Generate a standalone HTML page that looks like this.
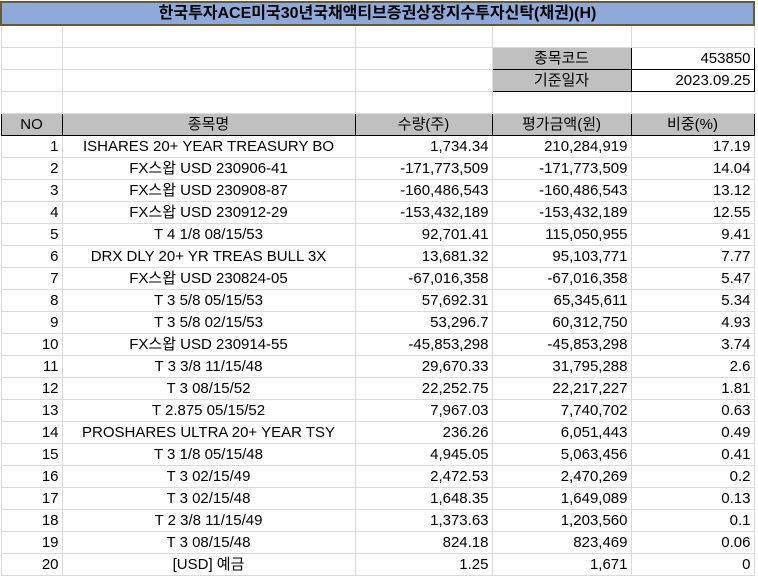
<!DOCTYPE html>
<html><head><meta charset="utf-8"><style>
html,body{margin:0;padding:0;background:#fff;width:758px;height:575px;overflow:hidden}
table{position:absolute;left:0;top:1px;border-collapse:collapse;table-layout:fixed;font-family:"Liberation Sans","Noto Sans CJK KR",sans-serif;font-size:15px;color:#000}
td{height:21px;border:1px solid #dadada;padding:0 3px;line-height:21px;white-space:nowrap;overflow:hidden}
td.r{text-align:right}td.c{text-align:center}
.title td{background:#8eaadb;border:2px solid #6b5a2e;font-weight:bold;text-align:center;font-size:16px}
.g{background:#c0c0c0}
.b{border:1px solid #000}
.hd td{background:#c0c0c0;border:1px solid #000;text-align:center}
</style></head><body>
<table>
<colgroup><col style="width:61px"><col style="width:293px"><col style="width:137px"><col style="width:139px"><col style="width:123px"></colgroup>
<tr class="title"><td colspan="5">한국투자ACE미국30년국채액티브증권상장지수투자신탁(채권)(H)</td></tr>
<tr><td></td><td></td><td></td><td></td><td></td></tr>
<tr><td></td><td></td><td></td><td class="g b c">종목코드</td><td class="b r">453850</td></tr>
<tr><td></td><td></td><td></td><td class="g b c">기준일자</td><td class="b r">2023.09.25</td></tr>
<tr><td></td><td></td><td></td><td></td><td></td></tr>
<tr class="hd"><td>NO</td><td>종목명</td><td>수량(주)</td><td>평가금액(원)</td><td>비중(%)</td></tr>
<tr><td class="r">1</td><td class="c">ISHARES 20+ YEAR TREASURY BO</td><td class="r">1,734.34</td><td class="r">210,284,919</td><td class="r">17.19</td></tr>
<tr><td class="r">2</td><td class="c">FX스왑 USD 230906-41</td><td class="r">-171,773,509</td><td class="r">-171,773,509</td><td class="r">14.04</td></tr>
<tr><td class="r">3</td><td class="c">FX스왑 USD 230908-87</td><td class="r">-160,486,543</td><td class="r">-160,486,543</td><td class="r">13.12</td></tr>
<tr><td class="r">4</td><td class="c">FX스왑 USD 230912-29</td><td class="r">-153,432,189</td><td class="r">-153,432,189</td><td class="r">12.55</td></tr>
<tr><td class="r">5</td><td class="c">T 4 1/8 08/15/53</td><td class="r">92,701.41</td><td class="r">115,050,955</td><td class="r">9.41</td></tr>
<tr><td class="r">6</td><td class="c">DRX DLY 20+ YR TREAS BULL 3X</td><td class="r">13,681.32</td><td class="r">95,103,771</td><td class="r">7.77</td></tr>
<tr><td class="r">7</td><td class="c">FX스왑 USD 230824-05</td><td class="r">-67,016,358</td><td class="r">-67,016,358</td><td class="r">5.47</td></tr>
<tr><td class="r">8</td><td class="c">T 3 5/8 05/15/53</td><td class="r">57,692.31</td><td class="r">65,345,611</td><td class="r">5.34</td></tr>
<tr><td class="r">9</td><td class="c">T 3 5/8 02/15/53</td><td class="r">53,296.7</td><td class="r">60,312,750</td><td class="r">4.93</td></tr>
<tr><td class="r">10</td><td class="c">FX스왑 USD 230914-55</td><td class="r">-45,853,298</td><td class="r">-45,853,298</td><td class="r">3.74</td></tr>
<tr><td class="r">11</td><td class="c">T 3 3/8 11/15/48</td><td class="r">29,670.33</td><td class="r">31,795,288</td><td class="r">2.6</td></tr>
<tr><td class="r">12</td><td class="c">T 3 08/15/52</td><td class="r">22,252.75</td><td class="r">22,217,227</td><td class="r">1.81</td></tr>
<tr><td class="r">13</td><td class="c">T 2.875 05/15/52</td><td class="r">7,967.03</td><td class="r">7,740,702</td><td class="r">0.63</td></tr>
<tr><td class="r">14</td><td class="c">PROSHARES ULTRA 20+ YEAR TSY</td><td class="r">236.26</td><td class="r">6,051,443</td><td class="r">0.49</td></tr>
<tr><td class="r">15</td><td class="c">T 3 1/8 05/15/48</td><td class="r">4,945.05</td><td class="r">5,063,456</td><td class="r">0.41</td></tr>
<tr><td class="r">16</td><td class="c">T 3 02/15/49</td><td class="r">2,472.53</td><td class="r">2,470,269</td><td class="r">0.2</td></tr>
<tr><td class="r">17</td><td class="c">T 3 02/15/48</td><td class="r">1,648.35</td><td class="r">1,649,089</td><td class="r">0.13</td></tr>
<tr><td class="r">18</td><td class="c">T 2 3/8 11/15/49</td><td class="r">1,373.63</td><td class="r">1,203,560</td><td class="r">0.1</td></tr>
<tr><td class="r">19</td><td class="c">T 3 08/15/48</td><td class="r">824.18</td><td class="r">823,469</td><td class="r">0.06</td></tr>
<tr><td class="r">20</td><td class="c">[USD] 예금</td><td class="r">1.25</td><td class="r">1,671</td><td class="r">0</td></tr>
</table>
</body></html>
